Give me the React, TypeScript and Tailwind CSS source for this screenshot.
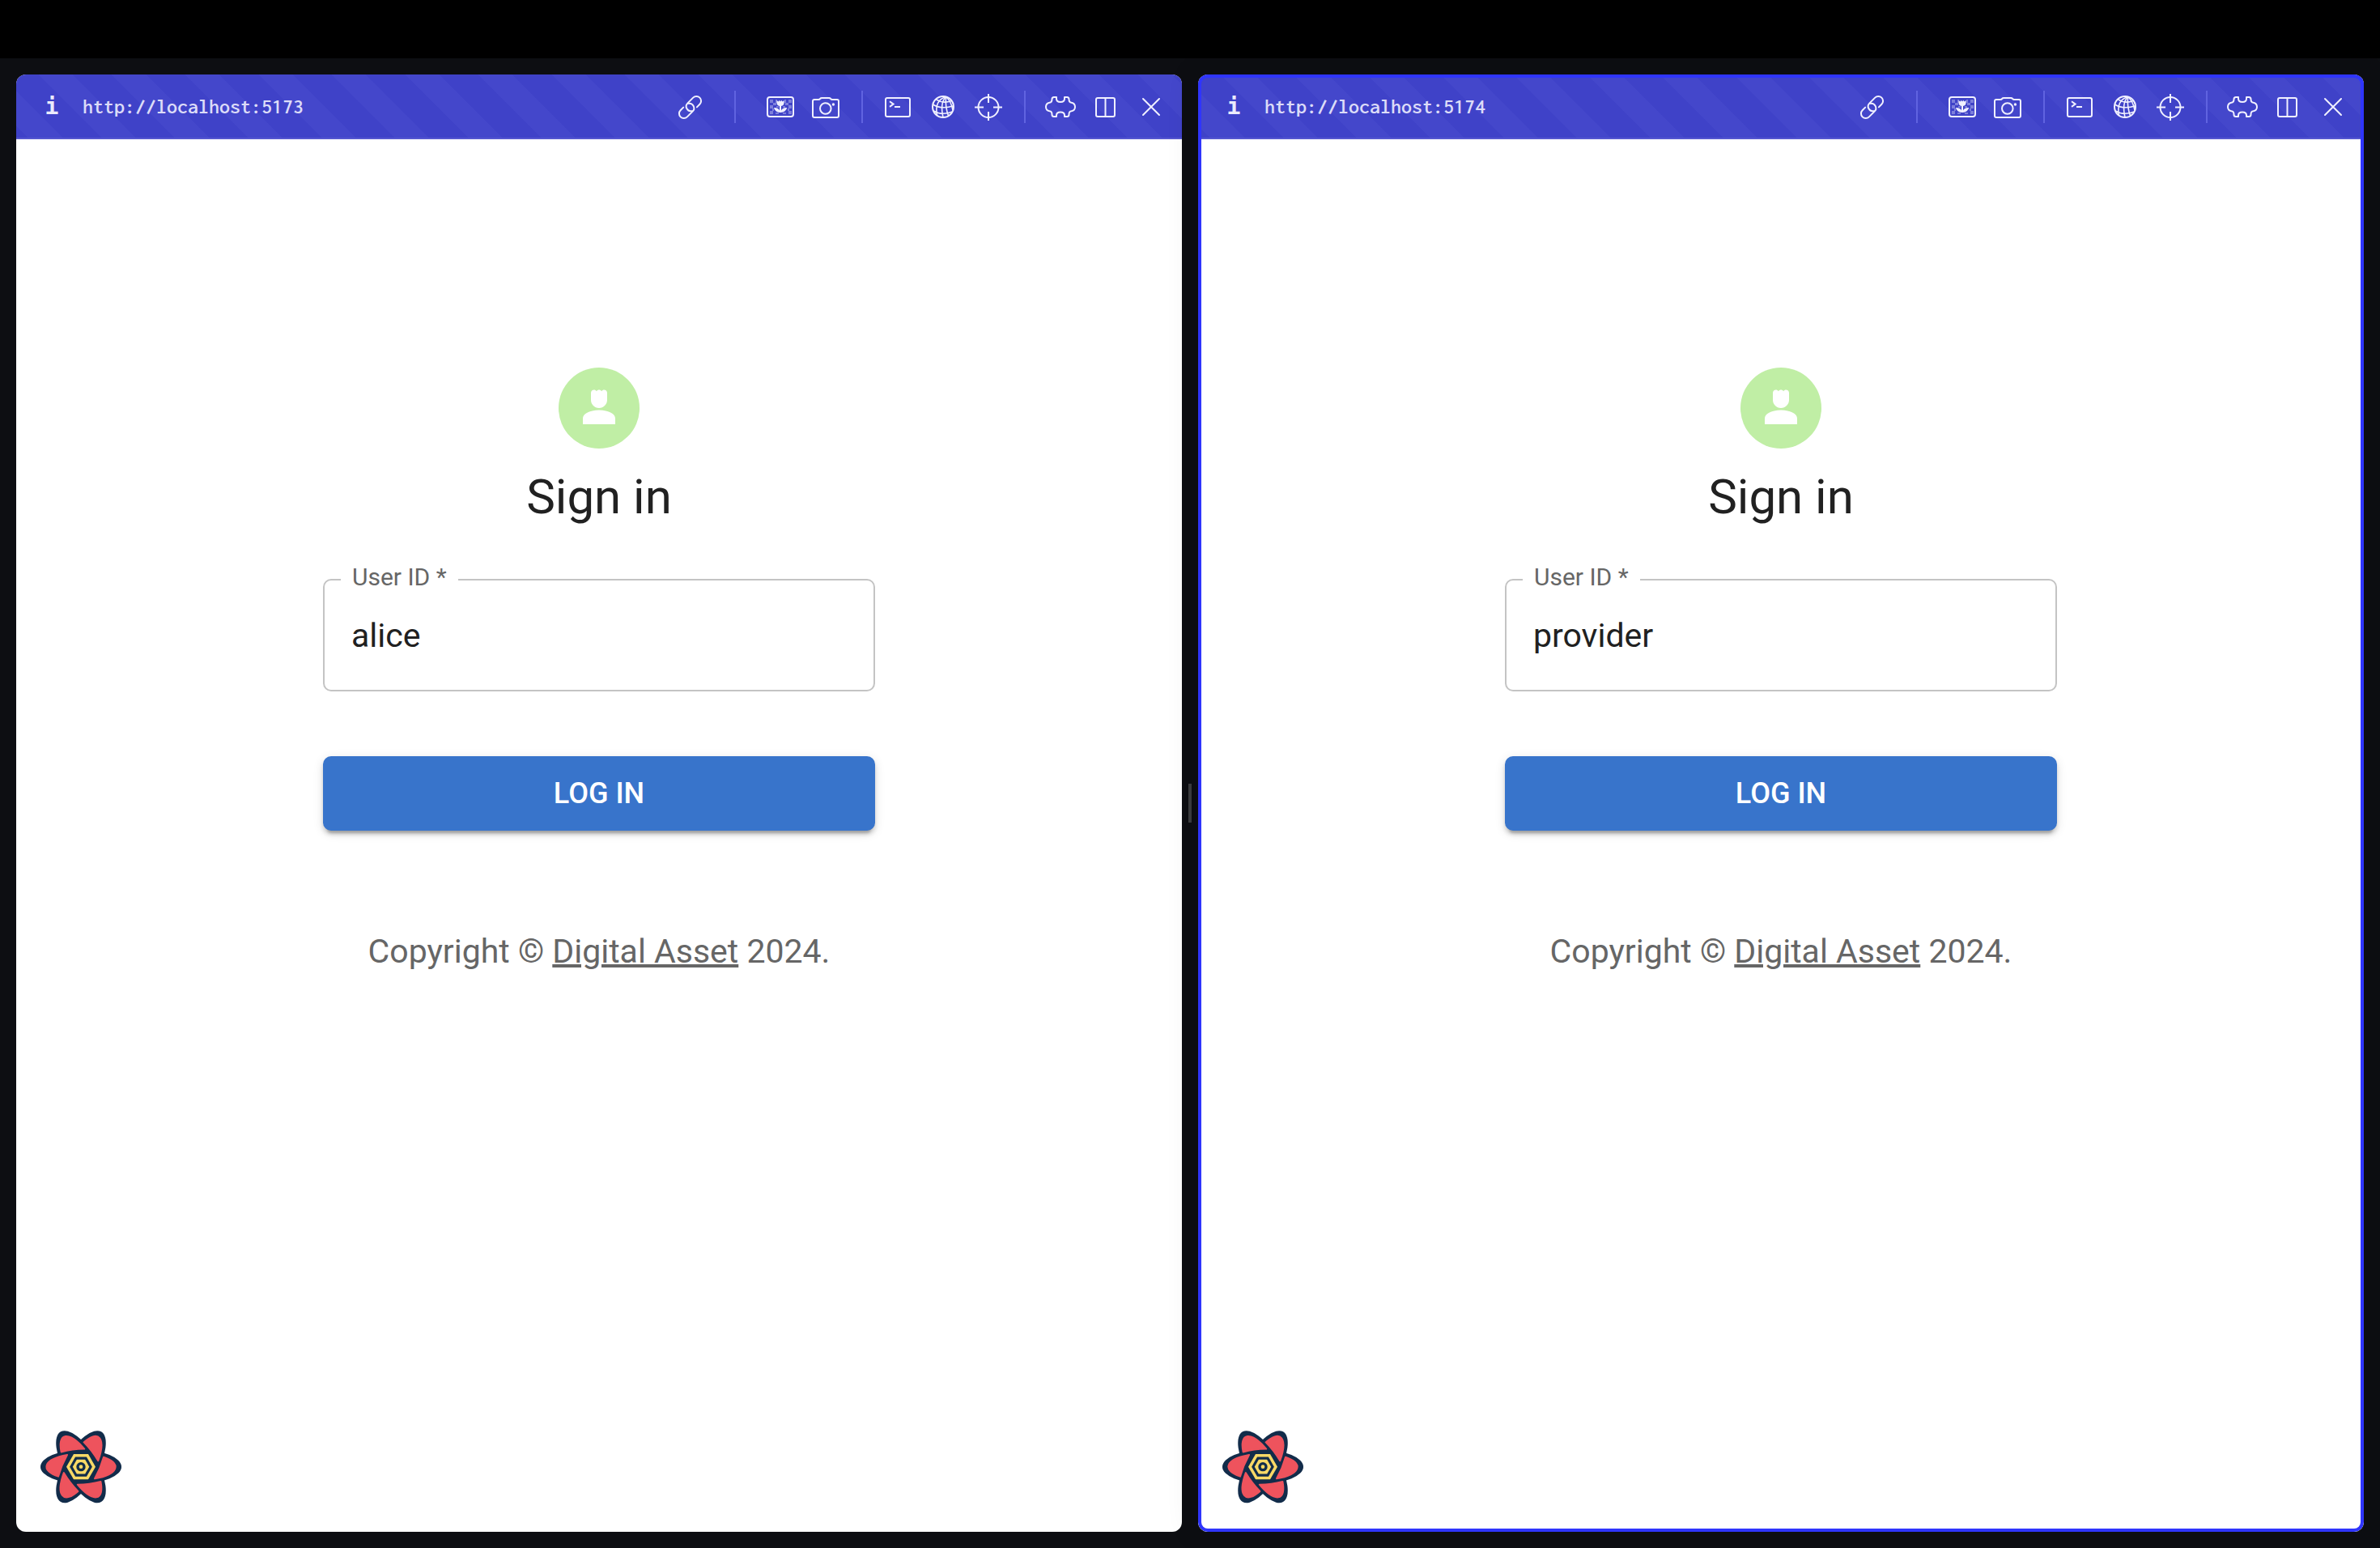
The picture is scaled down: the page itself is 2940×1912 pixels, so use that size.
import type { ReactNode } from "react";

const LINE = "size-10 fill-none stroke-current stroke-2";

function LinkIcon() {
  return (
    <svg viewBox="0 0 40 40" className={LINE} strokeLinecap="round" aria-hidden="true">
      <g transform="translate(20.5 20.5) rotate(-45)">
        <path d="M6 5.8 H11 A5.8 5.8 0 0 0 11 -5.8 H1.5 A5.8 5.8 0 0 0 -1.5 5" />
        <path d="M-6 -5.8 H-11 A5.8 5.8 0 0 0 -11 5.8 H-1.5 A5.8 5.8 0 0 0 1.5 -5" />
      </g>
    </svg>
  );
}

function PictureIcon() {
  return (
    <svg viewBox="0 0 40 40" className={LINE} aria-hidden="true">
      <rect x="4" y="8" width="32" height="24" rx="3" />
      <g className="fill-current stroke-none" opacity="0.35">
        <path d="M7 11h4v4H7zM14 11h2v4h-2zM25 11h2v4h-2zM30 11h4v4h-4zM11 15h4v3h-4zM26 15h4v3h-4zM7 18h4v4H7zM15 19h3v2h-3zM23 19h3v2h-3zM30 18h4v4h-4zM10 22h2v3h-2zM29 22h2v3h-2zM7 25h4v4H7zM30 25h4v4h-4zM14 27h4v2h-4zM23 27h4v2h-4z" />
      </g>
      <g className="fill-current stroke-none">
        <path d="M15.5 12 L17.6 13.4 L18.8 11.8 L20 13.4 L21.3 11.8 L22.5 13.4 L24.6 12 V15 Q24.4 18.6 21 19 V24.5 Q22.4 20.8 28.2 21 Q27 26.6 20 27 Q13 26.6 12 21 Q17.6 20.8 19 24.5 V19 Q15.7 18.6 15.5 15 Z" />
      </g>
    </svg>
  );
}

function CameraIcon() {
  return (
    <svg viewBox="0 0 40 40" className={LINE} strokeLinejoin="round" aria-hidden="true">
      <path d="M6 11 H11 Q12.5 11 13.2 9.9 Q13.8 9 15.2 9 H24 Q25.4 9 26 9.9 Q26.8 11 28.3 11 H34 Q36 11 36 13 V31 Q36 33 34 33 H6 Q4 33 4 31 V13 Q4 11 6 11 Z" />
      <circle cx="19.8" cy="22" r="6.8" />
      <circle cx="29.4" cy="17" r="1.7" className="fill-current stroke-none" />
    </svg>
  );
}

function TerminalIcon() {
  return (
    <svg viewBox="0 0 40 40" className={LINE} aria-hidden="true">
      <rect x="5" y="9" width="30" height="23" rx="2" />
      <path d="M10 13.3 L14.6 16.6 L10 19.9 M16 20 H23" />
    </svg>
  );
}

function GlobeIcon() {
  return (
    <svg viewBox="0 0 40 40" className={LINE} aria-hidden="true">
      <circle cx="20" cy="20" r="13" />
      <g strokeWidth="1.6">
        <path d="M23.5 7.5 Q9 12 12.5 30.5" />
        <path d="M23.5 7.5 Q16 15 20 33" />
        <path d="M23.5 7.5 Q22.5 20 26.5 31" />
        <path d="M23.5 7.5 Q30 13 32 24" />
        <path d="M11.5 10.8 Q20 16.5 30.5 12.5" />
        <path d="M7.2 17 Q18 23.5 32.8 18.8" />
        <path d="M8.2 25 Q18 31 31.5 26" />
      </g>
    </svg>
  );
}

function TargetIcon() {
  return (
    <svg viewBox="0 0 40 40" className={LINE} aria-hidden="true">
      <circle cx="20" cy="20.5" r="12.5" />
      <path d="M20 4 V15 M20 26 V37 M3 20.5 H14 M26 20.5 H37" />
    </svg>
  );
}

function PuzzleIcon() {
  return (
    <svg viewBox="0 0 40 40" className={LINE} strokeLinejoin="round" aria-hidden="true">
      <path d="M15 8 H12 Q9.5 8 9.5 10.5 Q9.5 14.5 6.5 14.7 Q2 15.5 2 20 Q2 24.5 6.5 25.3 Q9.5 25.5 9.5 29.5 Q9.5 32 12 32 H15 V30.5 Q15 26.5 20 26.5 Q25 26.5 25 30.5 V32 H28 Q30.5 32 30.5 29.5 Q30.5 25.5 33.5 25.3 Q38 24.5 38 20 Q38 15.5 33.5 14.7 Q30.5 14.5 30.5 10.5 Q30.5 8 28 8 H25 V10 Q25 14 20 14 Q15 14 15 10 Z" />
    </svg>
  );
}

function ColumnsIcon() {
  return (
    <svg viewBox="0 0 40 40" className={LINE} aria-hidden="true">
      <rect x="8" y="9" width="23" height="23" rx="2" />
      <path d="M19.5 9 V32" />
    </svg>
  );
}

function CloseIcon() {
  return (
    <svg viewBox="0 0 40 40" className={LINE} strokeLinecap="round" aria-hidden="true">
      <path d="M10 10 L30 30 M30 10 L10 30" />
    </svg>
  );
}

function ToolButton({ label, children }: { label: string; children: ReactNode }) {
  return (
    <button type="button" aria-label={label} className="flex h-14 w-14 items-center justify-center text-[#f0f0ff]">
      {children}
    </button>
  );
}

function Divider({ wide = false }: { wide?: boolean }) {
  return <span className={wide ? "mx-[27px] h-10 w-[2px] bg-[#6063e0]" : "mr-[15px] ml-4 h-10 w-[2px] bg-[#6063e0]"} />;
}

function Toolbar({ url }: { url: string }) {
  return (
    <header className="flex h-20 items-center bg-[repeating-linear-gradient(45deg,#3f42c8_0px,#3f42c8_12px,#4447cb_12px,#4447cb_42px,#3f42c8_42px,#3f42c8_64px)] pr-[10px] pl-6 shadow-[inset_0_-2px_0_#5557d0]">
      <button
        type="button"
        aria-label="Page info"
        className="w-10 text-center font-['DejaVu_Sans_Mono','Liberation_Mono',monospace] text-[28px] leading-10 font-bold text-[#ebebfc]"
      >
        i
      </button>
      <span className="ml-[18px] flex-1 font-['Inconsolata','Liberation_Mono',monospace] text-[26px] leading-8 font-semibold text-[#dcdcf8]">
        {url}
      </span>
      <ToolButton label="Copy link"><LinkIcon /></ToolButton>
      <Divider wide />
      <ToolButton label="Background"><PictureIcon /></ToolButton>
      <ToolButton label="Screenshot"><CameraIcon /></ToolButton>
      <Divider />
      <ToolButton label="Console"><TerminalIcon /></ToolButton>
      <ToolButton label="Network"><GlobeIcon /></ToolButton>
      <ToolButton label="Inspect"><TargetIcon /></ToolButton>
      <Divider />
      <ToolButton label="Extensions"><PuzzleIcon /></ToolButton>
      <ToolButton label="Split"><ColumnsIcon /></ToolButton>
      <ToolButton label="Close"><CloseIcon /></ToolButton>
    </header>
  );
}

const PETAL_ANGLES = [0, 60, 120, 180, 240, 300];
const HEX = "54,0 27,47 -27,47 -54,0 -27,-47 27,-47";

function FlowerLogo() {
  return (
    <svg viewBox="-150 -149 300 300" className="size-[100px]" aria-hidden="true">
      <g fill="#122c4a">
        <ellipse rx="150" ry="62" />
        <ellipse rx="150" ry="62" transform="rotate(60)" />
        <ellipse rx="150" ry="62" transform="rotate(120)" />
      </g>
      {PETAL_ANGLES.map((a) => (
        <path
          key={a}
          d="M-51 -44 A137 49 0 0 0 -84 36 Q-73 -4 -51 -44 Z"
          transform={`rotate(${a})`}
          fill="#ee535d"
          stroke="#ee535d"
          strokeWidth="6"
          strokeLinejoin="round"
        />
      ))}
      <polygon points={HEX} fill="#f9d966" />
      <polygon points={HEX} transform="scale(0.77)" fill="#122c4a" />
      <polygon points={HEX} transform="scale(0.57)" fill="#f9d966" />
      <circle r="17" fill="#122c4a" />
      <circle r="7" fill="#f9d966" />
    </svg>
  );
}

function Panel({ url, user, active = false }: { url: string; user: string; active?: boolean }) {
  const id = `user-${user}`;
  return (
    <section
      className={
        active
          ? "relative flex min-w-0 flex-1 flex-col overflow-hidden rounded-xl bg-white shadow-[0_0_40px_rgba(0,0,0,0.12)]"
          : "relative flex min-w-0 flex-1 flex-col overflow-hidden rounded-xl bg-white"
      }
    >
      <Toolbar url={url} />
      <main className="flex flex-1 flex-col items-center font-[Roboto,sans-serif] text-[#212121]">
        <div className="mt-[282px] flex size-[100px] items-center justify-center rounded-full bg-[#c0eea5]">
          <svg viewBox="0 0 24 24" className="size-[60px] fill-white" aria-hidden="true">
            <path d="M18.39 14.56C16.71 13.7 14.53 13 12 13s-4.71.7-6.39 1.56C4.61 15.07 4 16.1 4 17.22V20h16v-2.78c0-1.12-.61-2.15-1.61-2.66zM12 12c2.21 0 4-1.79 4-4V4.5c0-.83-.67-1.5-1.5-1.5-.52 0-.98.27-1.25.67-.27-.4-.73-.67-1.25-.67s-.98.27-1.25.67c-.27-.4-.73-.67-1.25-.67C8.67 3 8 3.67 8 4.5V8c0 2.21 1.79 4 4 4z" />
          </svg>
        </div>
        <h1 className="mt-5 text-[60px] leading-20">Sign in</h1>
        <form className="mt-[61px] flex w-[682px] max-w-full flex-col gap-20" onSubmit={(e) => e.preventDefault()}>
          <div className="relative">
            <label htmlFor={id} className="absolute -top-5 left-[22px] bg-white px-[14px] text-[30px] leading-9 text-[#666666]">
              User ID *
            </label>
            <input
              id={id}
              type="text"
              required
              defaultValue={user}
              className="block h-[139px] w-full rounded-[10px] border-2 border-[#c4c4c4] px-[33px] text-[41px] outline-none"
            />
          </div>
          <button
            type="submit"
            className="h-[92px] rounded-[10px] bg-[#3874cb] text-[36px] font-medium text-white shadow-[0_8px_3px_-5px_rgba(0,0,0,0.2),0_5px_5px_0_rgba(0,0,0,0.14),0_3px_13px_0_rgba(0,0,0,0.12)]"
          >
            LOG IN
          </button>
        </form>
        <p className="mt-[119px] text-[41px] leading-[60px] text-[#666666]">
          Copyright ©{" "}
          <a href="#" className="underline decoration-4 underline-offset-2">
            Digital Asset
          </a>{" "}
          2024.
        </p>
        <button type="button" aria-label="Open query devtools" className="mt-auto mb-[30px] ml-[30px] self-start">
          <FlowerLogo />
        </button>
      </main>
      {active && <div className="pointer-events-none absolute inset-0 rounded-xl border-4 border-[#2f35fc]" />}
    </section>
  );
}

export default function App() {
  return (
    <div className="flex min-h-screen flex-col bg-[#0d0e12]">
      <div className="h-[72px] bg-black" />
      <div className="flex flex-1 p-5">
        <Panel url="http://localhost:5173" user="alice" />
        <div className="flex w-5 items-center justify-center">
          <span className="h-12 w-1 bg-[#3d3e41]" />
        </div>
        <Panel url="http://localhost:5174" user="provider" active />
      </div>
    </div>
  );
}
